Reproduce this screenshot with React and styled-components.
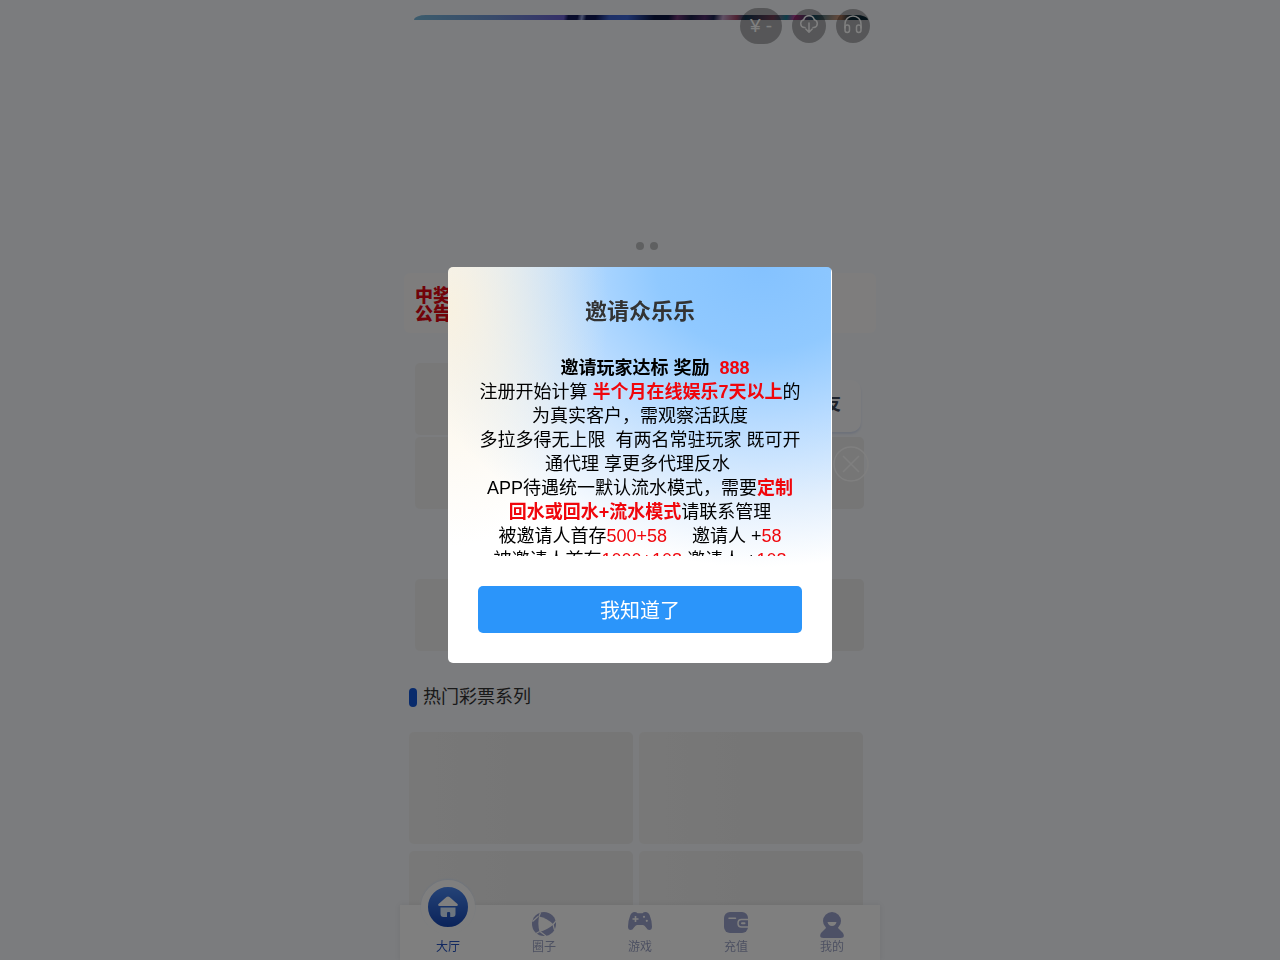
import React from "react";
import styled, { createGlobalStyle } from "styled-components";

const tabs = [
    { name: "圈子", icon: "circle" },
    { name: "游戏", icon: "game" },
    { name: "充值", icon: "wallet" },
    { name: "我的", icon: "user" },
];

const TabIcon = ({ name }) => (
    <svg width="24" height="26" viewBox="0 0 24 26" fill="#9ba2cc" aria-hidden="true">
        {name === "circle" && (
            <g>
                <circle cx="12" cy="12" r="12" />
                <path d="M7 4.500Q15 6 21.500 12.500Q15 18 7.500 20Q5.500 12 7 4.500Z" fill="#fff" />
                <path
                    d="M8.500 0.500L6.800 5M0.500 9.500L6 4.500M7.500 19.500L4 21.500M8 19.500L14 24M21 12.500L24 9M21 12.500L22.500 18"
                    stroke="#fff"
                    strokeWidth="1.200"
                    fill="none"
                />
            </g>
        )}
        {name === "game" && (
            <g>
                <path d="M6.500 0Q8.500 0 9.500 1.200H14.500Q15.500 0 17.500 0Q20.500 0 21.800 3.500Q24 9 24 14.500Q24 18 21.300 18Q19.500 18 18 15.500Q16.500 13 15 13H9Q7.500 13 6 15.500Q4.500 18 2.700 18Q0 18 0 14.500Q0 9 2.200 3.500Q3.500 0 6.500 0Z" />
                <path d="M7.500 4V10M4.500 7H10.500" stroke="#fff" strokeWidth="1.600" />
                <circle cx="16" cy="4.800" r="1.100" fill="#fff" />
                <circle cx="18.800" cy="8.800" r="1.100" fill="#fff" />
            </g>
        )}
        {name === "wallet" && (
            <g>
                <rect width="24" height="21" rx="6" />
                <path d="M5 6.300H11.500" stroke="#fff" strokeWidth="1.500" strokeLinecap="round" />
                <path
                    d="M24 7.500H17.500Q14 7.500 14 11.200Q14 15 17.500 15H24"
                    stroke="#fff"
                    strokeWidth="1.500"
                    fill="none"
                />
                <path d="M18 11.200H20.500" stroke="#fff" strokeWidth="2" strokeLinecap="round" />
            </g>
        )}
        {name === "user" && (
            <g>
                <circle cx="12" cy="9" r="9" />
                <path d="M6 16Q12 12 18 16L23 21Q25.500 26 20.500 26H3.500Q-1.500 26 1 21Z" />
                <path d="M7.500 10H16.500Q15.500 14 12 14Q8.500 14 7.500 10Z" fill="#fff" />
            </g>
        )}
    </svg>
);

const App = () => {
    return (
        <>
            <GlobalStyle />
            <Page>
                <HeaderActions>
                    <Balance type="button">¥ -</Balance>
                    <RoundButton type="button" aria-label="下载">
                        <svg width="20" height="20" viewBox="0 0 20 20">
                            <path d="M6 12.500H5A4 4 0 0 1 4.700 4.700A5.500 5.500 0 0 1 15.300 4.700A4 4 0 0 1 15 12.500H14M10 8V17M6.800 14L10 17.200L13.200 14" />
                        </svg>
                    </RoundButton>
                    <RoundButton type="button" aria-label="客服">
                        <svg width="20" height="20" viewBox="0 0 20 20">
                            <path d="M2 13V9A8 8 0 0 1 18 9V13" />
                            <rect x="2" y="10" width="4.500" height="7.500" rx="2.200" />
                            <rect x="13.500" y="10" width="4.500" height="7.500" rx="2.200" />
                        </svg>
                    </RoundButton>
                </HeaderActions>

                <Banner>
                    <BannerStrip />
                    <Dots>
                        <Dot />
                        <Dot />
                    </Dots>
                </Banner>

                <Notice>
                    <NoticeTitle>
                        中奖
                        <br />
                        公告
                    </NoticeTitle>
                </Notice>

                <Placeholders>
                    <PlaceholderRow>
                        <Skeleton />
                        <FriendCard>友</FriendCard>
                    </PlaceholderRow>
                    <PlaceholderRow>
                        <Skeleton />
                        <FloatClose type="button" aria-label="关闭">
                            <svg width="36" height="36" viewBox="0 0 36 36">
                                <circle cx="18" cy="18" r="17" />
                                <path d="M10 10L26 26M26 10L10 26" />
                            </svg>
                        </FloatClose>
                    </PlaceholderRow>
                </Placeholders>
                <Placeholders $top="70px">
                    <PlaceholderRow>
                        <Skeleton />
                    </PlaceholderRow>
                </Placeholders>

                <SectionTitle>热门彩票系列</SectionTitle>
                <LotteryGrid>
                    <Skeleton />
                    <Skeleton />
                    <Skeleton />
                    <Skeleton />
                </LotteryGrid>
            </Page>

            <TabBar>
                <Tab href="#home" $active>
                    <HomeBadge>
                        <svg width="20" height="22" viewBox="0 0 20 22" aria-hidden="true">
                            <path d="M8.500 1Q10 0 11.500 1L19.500 8Q20.500 10 18.500 10H1.500Q-0.500 10 0.500 8Z" fill="#fff" />
                            <path
                                d="M2.500 11.500H17.500V18Q17.500 21 14.500 21H12.200V17Q12.200 16 11.200 16H10Q9 16 9 17V21H5.500Q2.500 21 2.500 18Z"
                                fill="#d8eaff"
                            />
                        </svg>
                    </HomeBadge>
                    大厅
                </Tab>
                {tabs.map((tab) => (
                    <Tab href={`#${tab.icon}`} key={tab.icon}>
                        <TabIcon name={tab.icon} />
                        {tab.name}
                    </Tab>
                ))}
            </TabBar>

            <Overlay>
                <Dialog role="dialog" aria-modal="true" aria-labelledby="invite-title">
                    <DialogTitle id="invite-title">邀请众乐乐</DialogTitle>
                    <DialogBody>
                        <Line $indent>
                            <b>
                                邀请玩家达标 奖励&nbsp; <Red>888</Red>
                            </b>
                        </Line>
                        <Line>
                            注册开始计算 <Red as="b">半个月在线娱乐7天以上</Red>的为真实客户，需观察活跃度
                        </Line>
                        <Line>多拉多得无上限&nbsp; 有两名常驻玩家 既可开通代理 享更多代理反水&nbsp;</Line>
                        <Line>
                            APP待遇统一默认流水模式，需要<Red as="b">定制回水或回水+流水模式</Red>请联系管理
                        </Line>
                        <Line>
                            被邀请人首存<Red>500+58</Red>&nbsp;&nbsp;&nbsp;&nbsp; 邀请人 +<Red>58</Red>
                        </Line>
                        <Line>
                            被邀请人首存<Red>1000+108</Red> 邀请人 +<Red>108</Red>
                        </Line>
                    </DialogBody>
                    <ConfirmButton type="button">我知道了</ConfirmButton>
                </Dialog>
            </Overlay>
        </>
    );
};

const GlobalStyle = createGlobalStyle`
    * {
        box-sizing: border-box;
    }

    body {
        margin: 0;
        overflow: hidden;
        background-color: #f6f8fc;
        font-family: "Liberation Sans", "Noto Sans CJK SC", sans-serif;
    }

    button {
        padding: 0;
        border: none;
        font-family: inherit;
    }
`;

const Page = styled.main`
    position: relative;
    max-width: 480px;
    height: 100vh;
    margin: 0 auto;
    padding-top: 15px;
    overflow: hidden;
`;

const HeaderActions = styled.div`
    position: absolute;
    top: 8px;
    right: 10px;
    z-index: 2;
    display: flex;
    align-items: center;
    gap: 10px;
`;

const Balance = styled.button`
    width: 42px;
    height: 36px;
    border-radius: 18px;
    background-color: rgba(0, 0, 0, 0.3);
    color: white;
    font-size: 19px;
`;

const RoundButton = styled.button`
    display: flex;
    justify-content: center;
    width: 34px;
    height: 34px;
    padding-top: 6px;
    border-radius: 50%;
    background-color: rgba(0, 0, 0, 0.3);

    svg {
        fill: none;
        stroke: white;
        stroke-width: 1.5;
        stroke-linecap: round;
        stroke-linejoin: round;
    }
`;

const Banner = styled.section`
    display: flex;
    flex-direction: column;
    justify-content: space-between;
    height: 235px;
    padding: 0 12px 0 14px;
`;

const BannerStrip = styled.div`
    height: 5px;
    border-radius: 12px 12px 0 0 / 5px 5px 0 0;
    background: linear-gradient(
        100deg,
        #78b8da 0%,
        #7094d4 18%,
        #6a60d0 33%,
        #101858 34%,
        #101858 36%,
        #94a4e0 37%,
        #0c1654 38%,
        #0c1654 40%,
        #3c62d0 43%,
        #3c66d8 47%,
        #08123e 53%,
        #08123e 56%,
        #6c3474 58%,
        #182048 61%,
        #502a68 64%,
        #1a2450 66%,
        #c0a0c8 68%,
        #a04868 71%,
        #184a70 73%,
        #a05878 79%,
        #1a7a90 82%,
        #d03898 84%,
        #206880 88%,
        #d89878 94%,
        #10384c 96%
    );
`;

const Dots = styled.div`
    display: flex;
    justify-content: center;
    gap: 6px;
    padding-left: 12px;
`;

const Dot = styled.span`
    width: 8px;
    height: 8px;
    border-radius: 50%;
    background-color: #bfc0c2;
`;

const Notice = styled.section`
    display: flex;
    align-items: center;
    height: 60px;
    margin: 23px 4px 0;
    padding: 4px 11px 0;
    border-radius: 6px;
    background-color: #fcfbfb;
`;

const NoticeTitle = styled.h2`
    margin: 0;
    color: #e30613;
    font-size: 18px;
    font-weight: 900;
    line-height: 18px;
`;

const Placeholders = styled.section`
    display: flex;
    flex-direction: column;
    gap: 2px;
    margin-top: ${(props) => props.$top || "30px"};
    padding: 0 16px 0 15px;
`;

const PlaceholderRow = styled.div`
    position: relative;
    display: flex;
    align-items: flex-end;
    gap: 4px;
    height: 72px;
`;

const Skeleton = styled.div`
    flex: 1;
    height: 100%;
    border-radius: 5px;
    background: linear-gradient(90deg, #f1f1f1 0%, #ededed 45%, #ececec 100%);
`;

const FriendCard = styled.div`
    display: flex;
    align-items: center;
    justify-content: flex-end;
    width: 150px;
    height: 52px;
    margin: 0 3px 3px 0;
    padding: 0 20px 8px 0;
    border-radius: 10px;
    background-color: #fbfbfd;
    box-shadow: 0 2px 2px #dbe3f5;
    color: #3c4658;
    font-size: 18px;
    font-weight: bold;
`;

const FloatClose = styled.button`
    position: absolute;
    top: 9px;
    right: -5px;
    width: 36px;
    height: 36px;
    background: none;

    svg {
        fill: none;
        stroke: white;
        stroke-width: 1.5;
    }
`;

const SectionTitle = styled.h2`
    display: flex;
    align-items: center;
    gap: 6px;
    margin: 34px 9px 23px;
    color: #333;
    font-size: 18px;
    font-weight: normal;
    line-height: 24px;

    &::before {
        content: "";
        width: 8px;
        height: 19px;
        border-radius: 4px;
        background-color: #1256d8;
    }
`;

const LotteryGrid = styled.section`
    display: grid;
    grid-template-columns: 1fr 1fr;
    grid-auto-rows: 112px;
    gap: 7px 6px;
    padding: 0 17px 0 9px;
`;

const TabBar = styled.nav`
    position: fixed;
    right: 0;
    bottom: 0;
    left: 0;
    z-index: 5;
    display: flex;
    max-width: 480px;
    height: 55px;
    margin: 0 auto;
    background-color: white;
    box-shadow: 0 0 6px rgba(0, 0, 0, 0.08);
`;

const Tab = styled.a`
    display: flex;
    flex: 1;
    flex-direction: column;
    align-items: center;
    justify-content: flex-end;
    gap: 1px;
    padding-bottom: 5px;
    color: ${(props) => (props.$active ? "#2452c0" : "#9ba2c4")};
    font-size: 12px;
    line-height: 16px;
    text-decoration: none;
`;

const HomeBadge = styled.span`
    display: flex;
    flex-shrink: 0;
    align-items: center;
    justify-content: center;
    width: 54px;
    height: 54px;
    margin-bottom: 4px;
    border: 7px solid white;
    border-radius: 50%;
    background: linear-gradient(#4a86ee, #1546b4);
    box-shadow: 0 -1px 2px #dce8fa;
`;

const Overlay = styled.div`
    position: fixed;
    inset: 0;
    z-index: 10;
    display: flex;
    align-items: center;
    justify-content: center;
    padding-bottom: 30px;
    background-color: rgba(0, 0, 0, 0.5);
`;

const Dialog = styled.section`
    width: 80%;
    max-width: 384px;
    padding: 30px;
    border-radius: 5px;
    background-color: white;
    background-image: radial-gradient(ellipse 42% 240px at 0 40px, rgba(250, 241, 222, 0.9), rgba(250, 244, 230, 0)),
        radial-gradient(ellipse 98% 300px at 82% 0, #84c2ff 0%, #90c9ff 28%, #b8dbff 52%, #e2effd 78%, #fff 100%);
    background-size: calc(100% - 1px) 100%;
    background-repeat: no-repeat;
`;

const DialogTitle = styled.h1`
    margin: 0 0 29px;
    color: #333;
    font-size: 22px;
    line-height: 30px;
    text-align: center;
`;

const DialogBody = styled.div`
    height: 200px;
    overflow: hidden;
    color: black;
    font-size: 18px;
    line-height: 24px;
    text-align: center;
`;

const Line = styled.p`
    margin: 0;
    padding-left: ${(props) => (props.$indent ? "30px" : "0")};
`;

const Red = styled.span`
    color: #f0060c;
`;

const ConfirmButton = styled.button`
    display: block;
    width: 100%;
    height: 47px;
    margin-top: 30px;
    border-radius: 5px;
    background-color: #2b95fa;
    color: white;
    font-size: 20px;
`;

export default App;
